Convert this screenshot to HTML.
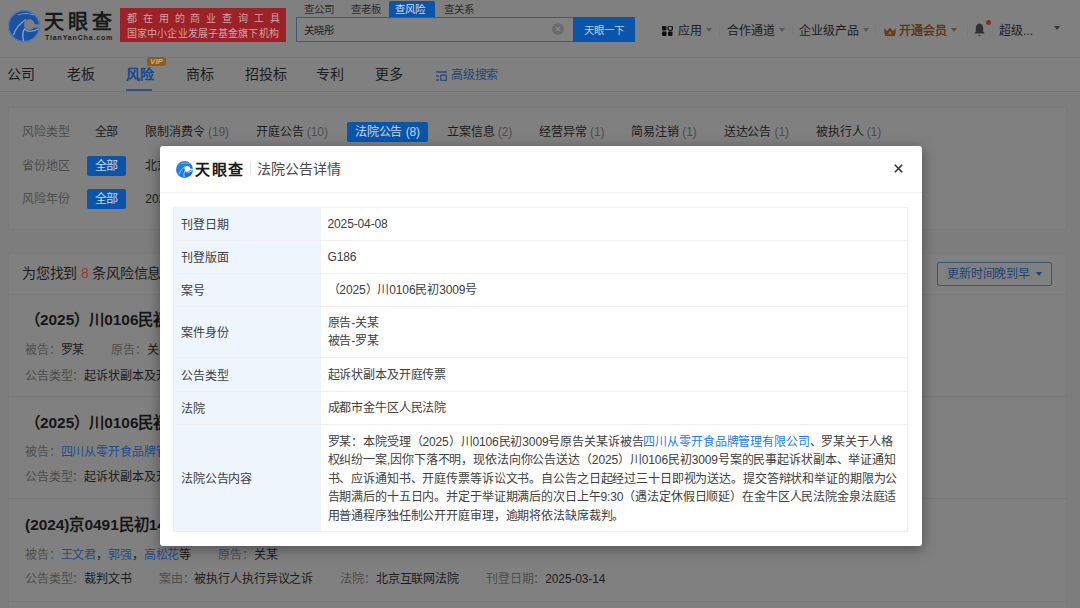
<!DOCTYPE html>
<html lang="zh-CN"><head><meta charset="utf-8">
<style>
*{margin:0;padding:0;box-sizing:border-box}
html,body{width:1080px;height:608px;overflow:hidden}
body{font-family:"Liberation Sans",sans-serif;background:#7d7d7d;color:#1c1c1c;font-size:12px;position:relative}
.abs{position:absolute;white-space:nowrap}
.header{position:absolute;left:0;top:0;width:1080px;height:58px;background:#808080;border-bottom:1px solid #787878}
.nav{position:absolute;left:0;top:58px;width:1080px;height:34px;background:#808080;border-bottom:1px solid #747474}
.card{position:absolute;background:#808080;border:1px solid #7a7a7a}
.modal{position:absolute;left:160px;top:146px;width:762px;height:400px;background:#fff;border-radius:3px;box-shadow:0 3px 14px rgba(0,0,0,.4)}
.stab{position:absolute;top:1px;height:16px;line-height:16px;font-size:10.5px;color:#2a2a2a;padding:0 6px}
.stab.on{background:#0a55aa;color:#d0dcea;border-radius:2px 2px 0 0}
.rn{position:absolute;top:21.5px;font-size:12px;color:#1c1c1c;line-height:18px}
.caret{display:inline-block;width:0;height:0;border-left:3px solid transparent;border-right:3px solid transparent;border-top:4px solid #5a5a5a;vertical-align:middle;margin-left:4px;margin-top:-2px}
.sep{position:absolute;top:22px;width:1px;height:14px;background:#7b7b7b}
.tab{position:absolute;top:64px;font-size:14px;color:#1c1c1c;line-height:20px}
.frow{position:absolute;left:22px;font-size:12px;line-height:20px;white-space:nowrap}
.flab{display:inline-block;width:65px;color:#4d4d4d}
.fi{display:inline-block;padding:0 7.5px;margin-right:12px;letter-spacing:-0.1px;color:#1c1c1c;border-radius:2px}
.fi i{font-style:normal;color:#4d4d4d}
.fi.on{background:#0a55aa;color:#c8d6e6}
.fi.on i{color:#c8d6e6}
.item{position:absolute;left:25px;white-space:nowrap}
.ititle{font-size:15.4px;font-weight:bold;color:#161616;line-height:22px}
.iline{font-size:12px;color:#1c1c1c;line-height:18px;letter-spacing:-0.13px}
.iline .k{color:#4d4d4d}
.iline a{color:#204c8c;text-decoration:none}
.dt{position:absolute;left:13px;top:61px;width:735px;border-collapse:collapse;table-layout:fixed;font-size:12px;color:#404040;letter-spacing:-0.13px}
.dt th{width:147px;background:#eef5fd;text-align:left;font-weight:normal;padding:2px 7px 0;line-height:18px;border:1px solid #f0f0f0;border-right:none;vertical-align:middle}
.dt td{padding:0 7px;border:1px solid #f0f0f0;border-left:none;line-height:18px;vertical-align:middle;white-space:nowrap}
.dt td.long{line-height:18.4px;padding-top:2px;letter-spacing:-0.13px}
.dt a{color:#1a80e6;text-decoration:none}
</style></head><body>
<div class="header">
  <svg class="abs" style="left:8px;top:10px" width="32" height="32" viewBox="0 0 32 32">
    <circle cx="16" cy="16" r="16" fill="#1e50a0"/>
    <circle cx="16" cy="16" r="15.4" fill="none" stroke="#6a8fc0" stroke-width="1.2" opacity=".7"/>
    <path d="M10 5 Q18 2 26 5" stroke="#6f9ad0" stroke-width="1.2" fill="none"/>
    <path d="M5.5 25 Q8.5 15.5 18 9.5" stroke="#7aa2d4" stroke-width="1.4" fill="none"/>
    <path d="M15.5 31 Q13.8 22.5 16.5 19 Q22 24 31 18.5" stroke="#7aa2d4" stroke-width="1.4" fill="none"/>
    <circle cx="21.3" cy="14.6" r="5.3" fill="#808080"/>
    <path d="M24 13.5 L32.5 15 L32.5 17.5 L24 17.5 Z" fill="#808080"/>
  </svg>
  <div class="abs" style="left:44px;top:12px;font-size:20px;line-height:20px;font-weight:bold;color:#1a1a1a;letter-spacing:3.8px">天眼查</div>
  <div class="abs" style="left:45px;top:34px;font-size:7px;line-height:7px;font-weight:bold;color:#1c1c1c;letter-spacing:0.85px">TianYanCha.com</div>
  <div class="abs" style="left:120px;top:8px;width:166px;height:34px;background:#9c2128"></div>
  <div class="abs" style="left:127px;top:13px;font-size:10px;line-height:12px;color:#d0a4a4;letter-spacing:5.85px">都在用的商业查询工具</div>
  <div class="abs" style="left:127px;top:27.5px;font-size:10px;line-height:12px;color:#d0a4a4;letter-spacing:0.12px">国家中小企业发展子基金旗下机构</div>
  <div class="stab" style="left:298px">查公司</div>
  <div class="stab" style="left:345px">查老板</div>
  <div class="stab on" style="left:389px;width:46px">查风险</div>
  <div class="stab" style="left:438px">查关系</div>
  <div class="abs" style="left:296px;top:17px;width:278px;height:25px;border:1px solid #3d5a7c;background:#828282"></div>
  <div class="abs" style="left:304px;top:22px;font-size:10.5px;color:#1c1c1c;line-height:16px">关晓彤</div>
  <svg class="abs" style="left:552px;top:23px" width="12" height="12" viewBox="0 0 12 12"><circle cx="6" cy="6" r="6" fill="#6c6c6c"/><path d="M4 4 L8 8 M8 4 L4 8" stroke="#8a8a8a" stroke-width="1.2"/></svg>
  <div class="abs" style="left:573px;top:17px;width:62px;height:25px;background:#0a55aa;color:#b8cce2;font-size:10.5px;line-height:25px;text-align:center;padding-top:0.5px">天眼一下</div>
  <div class="rn" style="left:662px"><svg style="vertical-align:-1px;margin-right:5px" width="11" height="10" viewBox="0 0 11 10"><rect x="0" y="0" width="4.5" height="4.5" rx="1" fill="#111"/><rect x="6" y="0" width="4.5" height="4.5" rx="2.2" fill="none" stroke="#111" stroke-width="1.2"/><rect x="0" y="5.5" width="4.5" height="4.5" rx="1" fill="#111"/><rect x="6" y="5.5" width="4.5" height="4.5" rx="1" fill="#111"/></svg>应用<span class="caret"></span></div>
  <div class="sep" style="left:719px"></div>
  <div class="rn" style="left:727px">合作通道<span class="caret"></span></div>
  <div class="sep" style="left:792px"></div>
  <div class="rn" style="left:799px">企业级产品<span class="caret"></span></div>
  <div class="sep" style="left:875px"></div>
  <div class="rn" style="left:884px;color:#5e3816;font-weight:bold"><svg style="vertical-align:-1px;margin-right:3px" width="12" height="9" viewBox="0 0 12 9"><path d="M0 1.5 L3.2 4 L6 0.5 L8.8 4 L12 1.5 L11 9 L1 9 Z" fill="#6a3c14"/><circle cx="6" cy="6" r="1.5" fill="#8a6a50"/></svg>开通会员<span class="caret" style="border-top-color:#6a4a30"></span></div>
  <div class="sep" style="left:967px"></div>
  <svg class="abs" style="left:974px;top:23px" width="11" height="14" viewBox="0 0 11 14"><path d="M5.5 0.5 C3 0.5 1.8 2.8 1.8 5 L1.8 8.5 L0.3 10.5 L10.7 10.5 L9.2 8.5 L9.2 5 C9.2 2.8 8 0.5 5.5 0.5 Z" fill="#2e3236"/><path d="M4 12 L7 12 L5.5 13.5 Z" fill="#3a3a3a"/></svg>
  <div class="abs" style="left:986px;top:19.5px;width:5px;height:5px;border-radius:50%;background:#862830"></div>
  <div class="sep" style="left:992px"></div>
  <div class="rn" style="left:999px">超级...</div>
  <span class="caret abs" style="left:1050px;top:28px;border-top-color:#3a3a3a"></span>
</div>
<div class="nav"></div>
<div class="tab" style="left:7px">公司</div>
<div class="tab" style="left:67px">老板</div>
<div class="tab" style="left:126px;color:#134a90;font-weight:bold">风险</div>
<div class="abs" style="left:126px;top:89px;width:26px;height:2px;background:#2e5283"></div>
<div class="abs" style="left:147px;top:57px;width:19px;height:9px;background:#8e5c20;border-radius:2px 3px 3px 0;color:#cfae7a;font-size:8px;line-height:9px;font-style:italic;text-align:center;font-weight:bold">VIP</div>
<div class="tab" style="left:186px">商标</div>
<div class="tab" style="left:245px">招投标</div>
<div class="tab" style="left:316px">专利</div>
<div class="tab" style="left:375px">更多</div>
<div class="abs" style="left:436px;top:66px;font-size:12px;color:#1d4478;line-height:18px;letter-spacing:-0.2px"><svg style="vertical-align:-2px;margin-right:4px" width="11" height="10" viewBox="0 0 11 10"><path d="M0 1 H11 M0 5 H3 M0 9 H3" stroke="#2a4a78" stroke-width="1.4"/><rect x="4.8" y="4" width="5.5" height="5.5" rx="1" fill="none" stroke="#2a4a78" stroke-width="1.4"/></svg>高级搜索</div>

<div class="card" style="left:8px;top:107px;width:1059px;height:123px"></div>
<div class="frow" style="top:122px"><span class="flab">风险类型</span><span class="fi">全部</span><span class="fi">限制消费令 <i>(19)</i></span><span class="fi">开庭公告 <i>(10)</i></span><span class="fi on">法院公告 (8)</span><span class="fi">立案信息 <i>(2)</i></span><span class="fi">经营异常 <i>(1)</i></span><span class="fi">简易注销 <i>(1)</i></span><span class="fi">送达公告 <i>(1)</i></span><span class="fi">被执行人 <i>(1)</i></span></div>
<div class="frow" style="top:156px"><span class="flab">省份地区</span><span class="fi on">全部</span><span class="fi">北京</span></div>
<div class="frow" style="top:189px"><span class="flab">风险年份</span><span class="fi on">全部</span><span class="fi">2025</span></div>

<div class="card" style="left:8px;top:253px;width:1059px;height:370px"></div>
<div class="abs" style="left:22px;top:263px;font-size:14px;color:#1c1c1c;line-height:20px;letter-spacing:-0.2px">为您找到 <span style="color:#9a3a30">8</span> 条风险信息</div>
<div class="abs" style="left:937px;top:262px;width:115px;height:24px;border:1px solid #3b5272;border-radius:2px;color:#1d4478;font-size:12px;line-height:22px;padding-left:9px;letter-spacing:-0.13px">更新时间晚到早<span class="caret" style="border-top-color:#1d4478;margin-left:6px"></span></div>
<div class="abs" style="left:8px;top:294px;width:1059px;height:1px;background:#797979"></div>

<div class="item" style="top:309px"><div class="ititle">（2025）川0106民初3009号</div></div>
<div class="item" style="top:340.5px"><div class="iline"><span class="k">被告：</span>罗某<span class="k" style="margin-left:27px">原告：</span>关某</div></div>
<div class="item" style="top:366.5px"><div class="iline"><span class="k">公告类型：</span>起诉状副本及开庭传票</div></div>
<div class="abs" style="left:8px;top:396px;width:1059px;height:1px;background:#777"></div>
<div class="item" style="top:412px"><div class="ititle">（2025）川0106民初3009号</div></div>
<div class="item" style="top:442.5px"><div class="iline"><span class="k">被告：</span><a>四川从零开食品牌管理有限公司</a></div></div>
<div class="item" style="top:468px"><div class="iline"><span class="k">公告类型：</span>起诉状副本及开庭传票</div></div>
<div class="abs" style="left:8px;top:498px;width:1059px;height:1px;background:#777"></div>
<div class="abs" style="left:8px;top:601px;width:1059px;height:1px;background:#777"></div>
<div class="item" style="top:514px"><div class="ititle">(2024)京0491民初14号</div></div>
<div class="item" style="top:545.5px"><div class="iline"><span class="k">被告：</span><a>王文君</a>，<a>郭强</a>，<a>高松花</a>等<span class="k" style="margin-left:27px">原告：</span>关某</div></div>
<div class="item" style="top:570px"><div class="iline"><span class="k">公告类型：</span>裁判文书<span class="k" style="margin-left:27px">案由：</span>被执行人执行异议之诉<span class="k" style="margin-left:27px">法院：</span>北京互联网法院<span class="k" style="margin-left:27px">刊登日期：</span>2025-03-14</div></div>

<div class="modal">
  <svg class="abs" style="left:16px;top:15px" width="17" height="17" viewBox="0 0 32 32">
    <defs><linearGradient id="lg" x1="0" y1="0" x2="1" y2="1"><stop offset="0" stop-color="#2a8cf0"/><stop offset="1" stop-color="#1565d0"/></linearGradient></defs>
    <circle cx="16" cy="16" r="16" fill="url(#lg)"/>
    <path d="M10 5 Q18 2 26 5" stroke="#8cc8ff" stroke-width="1.4" fill="none"/>
    <path d="M5.5 25 Q8.5 15.5 18 9.5" stroke="#9ad8ff" stroke-width="1.8" fill="none"/>
    <path d="M15.5 31 Q13.8 22.5 16.5 19 Q22 24 31 18.5" stroke="#9ad8ff" stroke-width="1.8" fill="none"/>
    <circle cx="21.3" cy="14.6" r="5.3" fill="#fff"/>
    <path d="M24 13.5 L32.5 15 L32.5 17.5 L24 17.5 Z" fill="#fff"/>
  </svg>
  <div class="abs" style="left:35px;top:16px;font-size:15px;font-weight:bold;color:#1a1a1a;line-height:16px;letter-spacing:1.6px">天眼查</div>
  <div class="abs" style="left:90px;top:16px;width:1px;height:13px;background:#e5e5e5"></div>
  <div class="abs" style="left:97px;top:13px;font-size:14px;color:#4a4a4a;line-height:20px">法院公告详情</div>
  <svg class="abs" style="left:734px;top:18px" width="9" height="9" viewBox="0 0 9 9"><path d="M0.8 0.8 L8.2 8.2 M8.2 0.8 L0.8 8.2" stroke="#333" stroke-width="1.6"/></svg>
  <div class="abs" style="left:0;top:46px;width:762px;height:1px;background:#f0f0f0"></div>
  <table class="dt">
    <tr style="height:33px"><th>刊登日期</th><td>2025-04-08</td></tr>
    <tr style="height:33px"><th>刊登版面</th><td>G186</td></tr>
    <tr style="height:33px"><th>案号</th><td>（2025）川0106民初3009号</td></tr>
    <tr style="height:51px"><th>案件身份</th><td>原告-关某<br>被告-罗某</td></tr>
    <tr style="height:34px"><th>公告类型</th><td>起诉状副本及开庭传票</td></tr>
    <tr style="height:33px"><th>法院</th><td>成都市金牛区人民法院</td></tr>
    <tr style="height:107px"><th>法院公告内容</th><td class="long">罗某：本院受理（2025）川0106民初3009号原告关某诉被告<a>四川从零开食品牌管理有限公司</a>、罗某关于人格<br>权纠纷一案,因你下落不明，现依法向你公告送达（2025）川0106民初3009号案的民事起诉状副本、举证通知<br>书、应诉通知书、开庭传票等诉讼文书。自公告之日起经过三十日即视为送达。提交答辩状和举证的期限为公<br>告期满后的十五日内。并定于举证期满后的次日上午9:30（遇法定休假日顺延）在金牛区人民法院金泉法庭适<br>用普通程序独任制公开开庭审理，逾期将依法缺席裁判。</td></tr>
  </table>
</div>
</body></html>
